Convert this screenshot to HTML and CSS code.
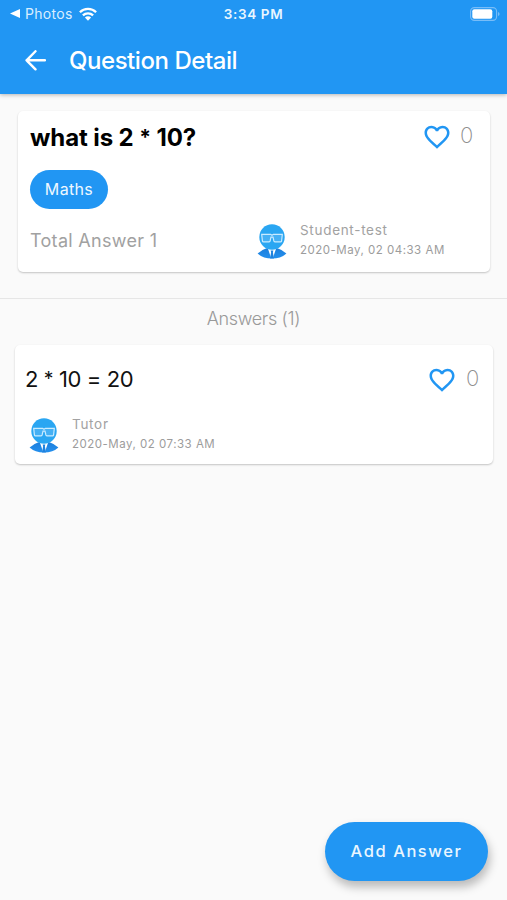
FILE: index.html
```html
<!DOCTYPE html>
<html lang="en">
<head>
<meta charset="utf-8">
<title>Question Detail</title>
<link rel="stylesheet" href="styles.css">
</head>
<body>
<svg class="defs" aria-hidden="true">
  <defs>
    <linearGradient id="suit" x1="0" y1="0" x2="0" y2="1"><stop offset="0" stop-color="#1d7fdc"/><stop offset="1" stop-color="#2490ee"/></linearGradient>
    <symbol id="heart" viewBox="0 0 24 24"><path d="M16.5 3c-1.74 0-3.41.81-4.5 2.09C10.910 3.810 9.240 3 7.500 3 4.420 3 2 5.420 2 8.500c0 3.780 3.400 6.860 8.550 11.540L12 21.350l1.450-1.320C18.600 15.360 22 12.280 22 8.500 22 5.420 19.580 3 16.500 3zm-4.400 15.550l-.1.100-.1-.1C7.140 14.240 4 11.390 4 8.500 4 6.500 5.500 5 7.500 5c1.540 0 3.040.990 3.570 2.360h1.870C13.460 5.990 14.960 5 16.500 5c2 0 3.500 1.500 3.500 3.500 0 2.890-3.140 5.740-7.900 10.050z"/></symbol>
    <symbol id="avatar" viewBox="0 0 30 35">
      <path d="M.6 29.600Q5 25.500 9.500 24.200h11Q25 25.500 29.400 29.600Q24 34.600 15 34.600T.6 29.600Z" fill="url(#suit)"/>
      <path d="M10.800 24.200L14.200 34.300h1.600l3.400-10.100Z" fill="#fff"/>
      <path d="M13.600 26.500h2.800l-.5 1.700 1 6.200h-3.800l1-6.200Z" fill="#1e82df"/>
      <circle cx="15" cy="13" r="12.700" fill="#2aa6f2"/>
      <path d="M4.700 10.300h8.900l1.400.9 1.400-.9h8.900l-.7 6.700q-.2.900-1 .9h-5.400q-1 0-1.300-.9L16 13.200h-2L13.100 17q-.3.900-1.300.9H6.400q-.8 0-1-.9Z" fill="#45b0f4" stroke="#c9ebff" stroke-width="1.200"/>
    </symbol>
  </defs>
</svg>
<div class="screen">
  <header class="header">
    <div class="status">
      <div class="status-left">
        <svg class="back-tri" viewBox="0 0 10 9"><path d="M0 4.500L10 0v9Z"/></svg>
        <span class="photos">Photos</span>
        <svg class="wifi" viewBox="0 0 18 14"><g fill="none" stroke="#fff" stroke-width="2.300"><path d="M.9 5.200a11.500 11.500 0 0 1 16.200 0"/><path d="M3.900 8.400a7.200 7.200 0 0 1 10.200 0"/></g><path d="M9 13.700L5.900 10.500a4.400 4.400 0 0 1 6.200 0Z" fill="#fff"/></svg>
      </div>
      <div class="time">3:34 PM</div>
      <div class="status-right">
        <svg class="battery" viewBox="0 0 30 14"><rect x=".6" y=".6" width="26" height="12.800" rx="3.800" fill="none" stroke="#78bdf8" stroke-width="1.100"/><rect x="2.300" y="2.300" width="20" height="9.400" rx="2" fill="#fff"/><path d="M28 5v4q1.600-.5 1.600-2T28 5Z" fill="#78bdf8"/></svg>
      </div>
    </div>
    <div class="appbar">
      <svg class="back" viewBox="0 0 20 20"><path d="M10 1.200L1.500 9.800 10 18.400M1.500 9.800H19" fill="none" stroke="#fff" stroke-width="2.300" stroke-linejoin="round" stroke-linecap="round"/></svg>
      <h1 class="title">Question Detail</h1>
    </div>
  </header>

  <section class="card question">
    <div class="row">
      <h2 class="question-text">what is 2 <span class="times">*</span> 10?</h2>
      <div class="likes"><svg class="heart"><use href="#heart"/></svg><span class="count">0</span></div>
    </div>
    <div class="chip"><span>Maths</span></div>
    <div class="row meta">
      <div class="total">Total Answer 1</div>
      <div class="author">
        <svg class="avatar"><use href="#avatar"/></svg>
        <div class="who"><div class="name">Student-test</div><div class="date">2020-May, 02 04:33 AM</div></div>
      </div>
    </div>
  </section>

  <div class="answers-title"><span>Answers (1)</span></div>

  <section class="card answer">
    <div class="row">
      <div class="answer-text">2 <span class="times">*</span> 10 = 20</div>
      <div class="likes"><svg class="heart"><use href="#heart"/></svg><span class="count">0</span></div>
    </div>
    <div class="author">
      <svg class="avatar"><use href="#avatar"/></svg>
      <div class="who"><div class="name">Tutor</div><div class="date">2020-May, 02 07:33 AM</div></div>
    </div>
  </section>

  <button class="fab"><span>Add Answer</span></button>
</div>
</body>
</html>
```

FILE: styles.css
```css
* { box-sizing: border-box; }
body { margin: 0; background: #fafafa; font-family: Inter, "Liberation Sans", sans-serif; }
.defs { position: absolute; width: 0; height: 0; }
.screen { height: 900px; display: flex; flex-direction: column; overflow: hidden; white-space: nowrap; }
.header { height: 94px; flex: none; background: #2196f3; color: #fff; box-shadow: 0 1px 4px rgba(0,0,0,.28); }
.status { height: 27px; display: grid; grid-template-columns: 1fr auto 1fr; align-items: center; padding: 0 7px 0 10px; }
.status-left { display: flex; align-items: center; }
.back-tri { width: 10px; height: 9px; fill: #fff; }
.photos { margin-left: 5px; font-size: 14px; letter-spacing: .3px; color: #d9eeff; }
.wifi { width: 18px; height: 14px; margin-left: 6px; }
.time { margin-right: 3px; font-size: 13.500px; font-weight: 600; letter-spacing: .65px; color: #e9f6ff; }
.status-right { display: flex; justify-content: flex-end; }
.battery { width: 30px; height: 14px; }
.appbar { height: 67px; display: flex; align-items: center; padding-left: 25px; }
.back { width: 21px; height: 21px; }
.title { margin: 0 0 0 23px; font-size: 24px; line-height: 30px; font-weight: 500; letter-spacing: -.45px; }
.card { flex: none; background: #fff; border-radius: 5px; box-shadow: 0 1px 2px rgba(0,0,0,.22); }
.row { display: flex; justify-content: space-between; }
.question { margin: 17px 17px 0 18px; height: 161px; padding: 11px 16px 0 12px; }
.question-text { margin: 0; font-size: 24px; line-height: 32px; font-weight: 700; letter-spacing: -.1px; color: #000; }
.times { font-size: .88em; line-height: 0; vertical-align: 1px; }
.likes { display: flex; align-items: flex-start; }
.heart { width: 30px; height: 30px; fill: #2196f3; }
.count { width: 14px; margin-left: 9px; font-size: 22px; line-height: 27px; font-weight: 200; color: #8c8c8c; }
.chip { width: 78px; height: 39px; margin-top: 16px; padding-bottom: 1px; border-radius: 20px; background: #2196f3; color: #eef8ff; display: flex; align-items: center; justify-content: center; font-size: 16px; letter-spacing: .35px; }
.question .count { margin-left: 8px; }
.meta { margin-top: 11px; }
.total { font-size: 18px; line-height: 42px; letter-spacing: .3px; color: #a1a1a1; }
.author { display: flex; }
.meta .author { width: 217px; }
.avatar { width: 30px; height: 35px; margin-top: 4px; }
.who { margin-left: 13px; }
.name { font-size: 13.500px; line-height: 20px; letter-spacing: .7px; color: #a2a2a2; }
.date { font-size: 11.500px; line-height: 20px; letter-spacing: .5px; color: #9c9c9c; }
.answers-title { flex: none; height: 40px; margin-top: 26px; border-top: 1px solid #e6e6e6; text-align: center; font-size: 18px; line-height: 40px; font-weight: 300; letter-spacing: -.35px; color: #999; }
.answer { margin: 7px 14px 0 15px; height: 119px; padding: 20px 13px 0 10px; }
.answer-text { font-size: 22px; line-height: 29px; letter-spacing: -.4px; word-spacing: 0; color: #111; }
.answer .author { margin: 19px 0 0 4px; }
.fab { flex: none; width: 163px; height: 59px; margin: auto 19px 19px auto; padding: 0 0 1px; border: 0; border-radius: 30px; background: #2196f3; color: #e9f6ff; font: 500 16.500px Inter, sans-serif; letter-spacing: 1.550px; box-shadow: 2px 6px 10px rgba(0,0,0,.26); }
```
